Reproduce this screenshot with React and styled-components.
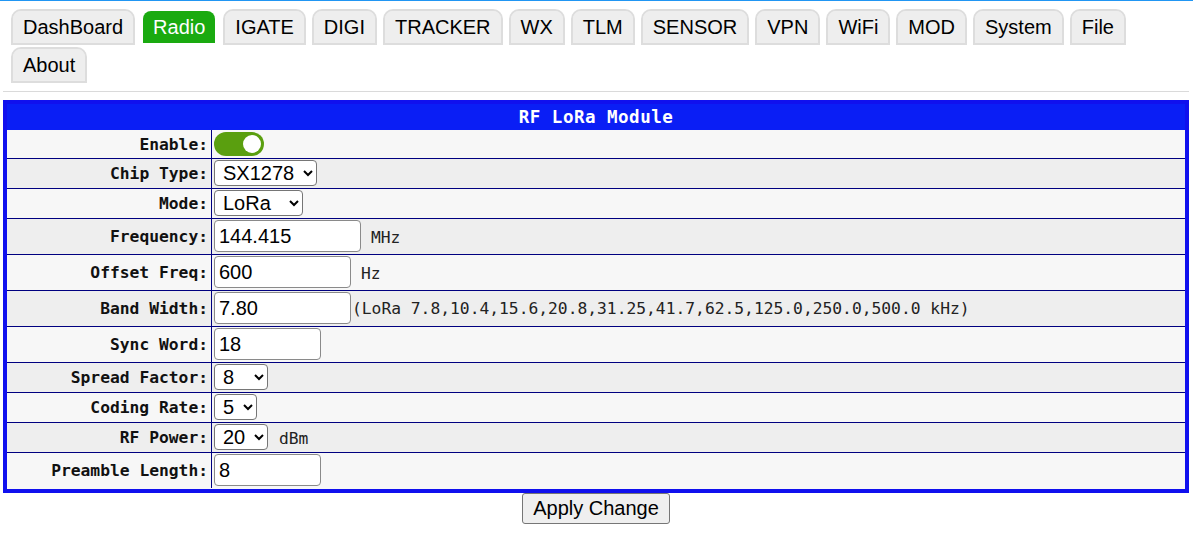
import React, { useState } from "react";
import styled, { createGlobalStyle } from "styled-components";

const GlobalStyle = createGlobalStyle`
  body {
    margin: 0;
    background: #fff;
    font-family: "Liberation Sans", Arial, sans-serif;
  }
`;

const Page = styled.div`
  border-top: 1px solid #2196f3;
  padding: 0 4px 0 3px;
`;

const TabBar = styled.nav`
  display: flex;
  flex-wrap: wrap;
  gap: 2px 6px;
  padding: 8px 0 0 8px;
`;

const Tab = styled.a`
  box-sizing: border-box;
  height: 36px;
  padding: 0 10px;
  display: flex;
  align-items: center;
  border: 2px solid ${(p) => (p.$active ? "transparent" : "#dddddd")};
  border-radius: 10px 10px 0 0;
  background: ${(p) => (p.$active ? "#1aaa10" : "#eeeeee")};
  background-clip: padding-box;
  color: ${(p) => (p.$active ? "#fff" : "#000")};
  font-size: 20px;
  text-decoration: none;
  cursor: pointer;
`;

const Divider = styled.hr`
  border: 0;
  height: 1px;
  background: #dadada;
  margin: 8px 0;
`;

const Panel = styled.div`
  border: 4px solid #1010ee;
`;

const PanelTitle = styled.div`
  height: 26px;
  display: flex;
  align-items: center;
  justify-content: center;
  background: #0a1ef5;
  color: #fff;
  font-family: "DejaVu Sans Mono", monospace;
  font-weight: bold;
  font-size: 17.5px;
  letter-spacing: 0.5px;
`;

const Row = styled.div`
  display: grid;
  grid-template-columns: 205px 1fr;
  background: ${(p) => (p.$alt ? "#eeeeee" : "#f7f7f7")};
  border-bottom: ${(p) => (p.$last ? "none" : "1px solid #000080")};
  padding-bottom: ${(p) => (p.$last ? "1px" : "0")};
`;

const Label = styled.div`
  display: flex;
  align-items: center;
  justify-content: flex-end;
  padding-right: 3px;
  border-right: 1px solid #000080;
  font-family: "DejaVu Sans Mono", monospace;
  font-weight: bold;
  font-size: 16.3px;
  color: #111;
  white-space: nowrap;
`;

const Value = styled.div`
  display: flex;
  align-items: center;
  padding: ${(p) => (p.$roomy ? "2px 2px 2px" : "1px 2px 2px")};
`;

const TextInput = styled.input`
  box-sizing: border-box;
  width: ${(p) => p.$w}px;
  height: 32px;
  margin: 0;
  padding: 0 4px;
  border: 1px solid #8a8a8a;
  border-radius: 4px;
  background: #fff;
  font-family: "Liberation Sans", Arial, sans-serif;
  font-size: 20px;
  color: #000;
`;

const Select = styled.select`
  box-sizing: border-box;
  width: ${(p) => p.$w}px;
  height: 26px;
  margin: 0;
  padding: 0 0 0 4px;
  border: 1px solid #767676;
  border-radius: 4px;
  background: #fff;
  font-family: "Liberation Sans", Arial, sans-serif;
  font-size: 20px;
  color: #000;
`;

const Unit = styled.span`
  margin-left: ${(p) => p.$gap}px;
  padding-top: ${(p) => p.$drop}px;
  font-family: "DejaVu Sans Mono", monospace;
  font-size: 16.3px;
  color: #222;
  white-space: nowrap;
`;

const Switch = styled.button`
  position: relative;
  width: 50px;
  height: 24px;
  margin: 0;
  padding: 0;
  border: 0;
  border-radius: 12px;
  background: ${(p) => (p.$on ? "#5a9f0f" : "#bbb")};
  cursor: pointer;

  &::after {
    content: "";
    position: absolute;
    top: 3px;
    left: ${(p) => (p.$on ? "29px" : "3px")};
    width: 18px;
    height: 18px;
    border-radius: 50%;
    background: #fff;
  }
`;

const Actions = styled.div`
  display: flex;
  justify-content: center;
`;

const ApplyButton = styled.button`
  box-sizing: border-box;
  height: 31px;
  padding: 0 10px;
  border: 1px solid #767676;
  border-radius: 3px;
  background: #efefef;
  font-family: "Liberation Sans", Arial, sans-serif;
  font-size: 20px;
  color: #000;
`;

const tabs = [
  "DashBoard", "Radio", "IGATE", "DIGI", "TRACKER", "WX", "TLM", "SENSOR",
  "VPN", "WiFi", "MOD", "System", "File", "About",
];

const bandList = "(LoRa 7.8,10.4,15.6,20.8,31.25,41.7,62.5,125.0,250.0,500.0 kHz)";

const rows = [
  { label: "Enable:", kind: "toggle" },
  { label: "Chip Type:", kind: "select", value: "SX1278", options: ["SX1278", "SX1276", "SX1262", "SX1268"], w: 103 },
  { label: "Mode:", kind: "select", value: "LoRa", options: ["LoRa", "GFSK"], w: 89 },
  { label: "Frequency:", kind: "input", value: "144.415", w: 147, unit: "MHz", gap: 10, drop: 3 },
  { label: "Offset Freq:", kind: "input", value: "600", w: 137, unit: "Hz", gap: 10, drop: 3 },
  { label: "Band Width:", kind: "input", value: "7.80", w: 137, unit: bandList, gap: 1, drop: 0 },
  { label: "Sync Word:", kind: "input", value: "18", w: 107 },
  { label: "Spread Factor:", kind: "select", value: "8", options: ["6", "7", "8", "9", "10", "11", "12"], w: 54 },
  { label: "Coding Rate:", kind: "select", value: "5", options: ["5", "6", "7", "8"], w: 43 },
  { label: "RF Power:", kind: "select", value: "20", options: ["10", "14", "17", "20", "22"], w: 54, unit: "dBm", gap: 11, drop: 2 },
  { label: "Preamble Length:", kind: "input", value: "8", w: 107 },
];

const App = () => {
  const [enabled, setEnabled] = useState(true);

  const renderField = (row) => {
    if (row.kind === "toggle") {
      return <Switch $on={enabled} onClick={() => setEnabled(!enabled)} aria-label="Enable" />;
    }
    if (row.kind === "select") {
      return (
        <Select $w={row.w} defaultValue={row.value}>
          {row.options.map((o) => (
            <option key={o} value={o}>{o}</option>
          ))}
        </Select>
      );
    }
    return <TextInput $w={row.w} defaultValue={row.value} />;
  };

  return (
    <Page>
      <GlobalStyle />
      <TabBar>
        {tabs.map((t) => (
          <Tab key={t} $active={t === "Radio"}>{t}</Tab>
        ))}
      </TabBar>
      <Divider />
      <Panel>
        <PanelTitle>RF LoRa Module</PanelTitle>
        {rows.map((row, i) => (
          <Row key={row.label} $alt={i % 2 === 1} $last={i === rows.length - 1}>
            <Label>{row.label}</Label>
            <Value $roomy={row.kind === "toggle"}>
              {renderField(row)}
              {row.unit && <Unit $gap={row.gap} $drop={row.drop}>{row.unit}</Unit>}
            </Value>
          </Row>
        ))}
      </Panel>
      <Actions>
        <ApplyButton>Apply Change</ApplyButton>
      </Actions>
    </Page>
  );
};

export default App;
